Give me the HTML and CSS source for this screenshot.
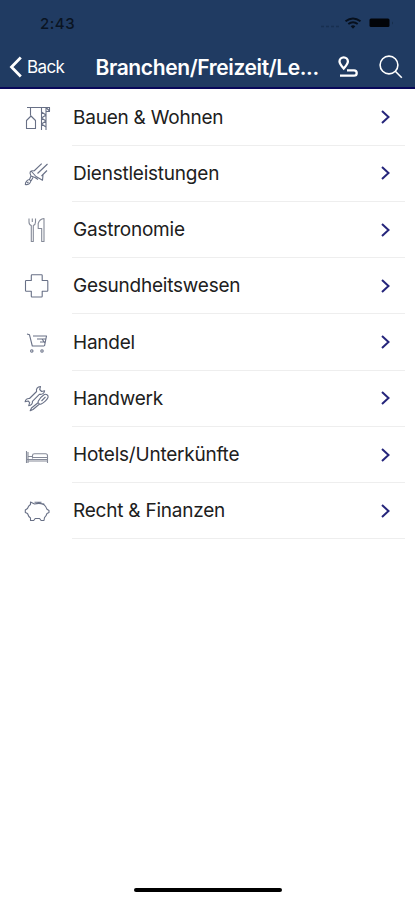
FILE: index.html
```html
<!DOCTYPE html>
<html lang="de">
<head>
<meta charset="utf-8">
<meta name="viewport" content="width=device-width, initial-scale=1">
<title>Branchen/Freizeit/Le...</title>
<link rel="stylesheet" href="styles.css">
</head>
<body>
<svg class="defs" aria-hidden="true"><symbol id="chev" viewBox="0 0 12 16"><path d="M2 2l6.500 6L2 14"/></symbol></svg>
<header>
  <div class="status">
    <time>2:43</time>
    <svg width="74" height="14" viewBox="0 0 74 14">
      <path d="M0 10.500h18" stroke="#172f50" stroke-width="1.500" stroke-dasharray="3 2" fill="none"/>
      <g fill="none" stroke="#07101d" stroke-width="2"><path d="M24.500 5.200q7.500-5.600 15 0M27.300 8q4.700-3.500 9.400 0"/></g>
      <path d="M29.700 10.200q2.300-1.700 4.600 0L32 12.700z" fill="#07101d"/>
      <rect x="48.500" y="2.500" width="20" height="8.500" rx="1.500" fill="#020408"/><path d="M71 5.500q2 1.500 0 3z" fill="#162d4b"/>
    </svg>
  </div>
  <nav>
    <a class="back"><svg width="14" height="24" viewBox="0 0 14 24"><path d="M11.800 2.500L2.500 12l9.300 9.500" fill="none" stroke="#fff" stroke-width="2.800"/></svg><span>Back</span></a>
    <h1>Branchen/Freizeit/Le...</h1>
    <svg class="route" width="22" height="24" viewBox="0 0 22 24"><path d="M6.700 13.500C4.500 11 2.500 8.700 2.500 6.500a4.200 4.200 0 018.400 0c0 2.200-2 4.500-4.200 7z"/><path d="M10 15.300h7a2.700 2.700 0 010 5.400H3"/></svg>
    <svg class="search" width="26" height="26" viewBox="0 0 26 26"><circle cx="11" cy="11" r="8.900"/><path d="M17.300 17.300l6.500 6.500"/></svg>
  </nav>
</header>
<main>
  <div class="row"><svg class="icon" viewBox="0 0 30 30"><path d="M5 4.500h23M8.500 4.500v8M9 13l-4.500 4.500v8h9v-8zM19.500 4.500V27M24 4.500V27M19.500 9l4.500 3-4.500 3 4.500 3-4.500 3 4.500 3M24 4.500l3.500 3.500V4.500M24 8.500h4"/></svg><div class="cell"><span>Bauen &amp; Wohnen</span><svg class="go"><use href="#chev"/></svg></div></div>
  <div class="row"><svg class="icon" viewBox="0 0 30 30"><path d="M19.700 4.700L12 12M25.500 5L15.500 14.500M25 11.500l-5.500 5.500M12 12c-2-.8-4 .3-4 2.200l1 3M9.500 12.500l4.500 5 6.500 3.700.5-5M9 17l4 1.500 3 2M9 17l-1.500 3.500M7.500 20.500c-2 0-4.200 2.500-4.200 5 2.500.7 5-1 5.500-3.500zM5 24l1.500-1M9 22l2-3.500"/></svg><div class="cell"><span>Dienstleistungen</span><svg class="go"><use href="#chev"/></svg></div></div>
  <div class="row"><svg class="icon light" viewBox="0 0 30 30"><path d="M7 3.500V7q0 2.700 2.300 3.500v16h2v-16q2.200-.8 2.200-3.500V3.500M10.300 3.500V7M22 26.500v-23q-4.500.5-5.800 5v5h3.500v13z"/></svg><div class="cell"><span>Gastronomie</span><svg class="go"><use href="#chev"/></svg></div></div>
  <div class="row"><svg class="icon" viewBox="0 0 30 30"><path d="M10 3.700h9.500q.7 0 .7.700v5.100h4.900q.7 0 .7.700v9.300q0 .7-.7.700h-4.900v5.100q0 .7-.7.700H10q-.7 0-.7-.7v-5.100H4.200q-.7 0-.7-.7v-9.300q0-.7.7-.7h5.100V4.400q0-.7.700-.7z"/></svg><div class="cell"><span>Gesundheitswesen</span><svg class="go"><use href="#chev"/></svg></div></div>
  <div class="row"><svg class="icon" viewBox="0 0 30 30"><path d="M5 6l2.500.8L10.300 18h12M11 8h13.500l-2 10M15 11h8.500M18 14h5M20 11l3 4"/><circle cx="9.800" cy="23" r="1.200"/><circle cx="20" cy="23" r="1.200"/></svg><div class="cell"><span>Handel</span><svg class="go"><use href="#chev"/></svg></div></div>
  <div class="row"><svg class="icon" viewBox="0 0 30 30"><path d="M18.500 2.500c-3 .3-4.700 2.500-3.900 5L7.500 14.500c-2.200-.4-4 1-4.400 3.300l3-.8 1.600 1.700-1 3c2.300-.3 4.200-2 3.700-4.300l7.200-7.200c2.500.7 4.700-1 5-3.500l-3 .8-1.900-2zM22 10.700c2-1.300 4.800.5 4 2.800-.7 2-4.300 5.500-6.800 6.500-1.500.7-3.700-.8-3-2.700 1-2.300 3.800-5.300 5.800-6.600zM19.500 17l4-4.200M16 18.700L9.500 24l-1.300 2.800 2.800-1.300 6.500-5.500"/></svg><div class="cell"><span>Handwerk</span><svg class="go"><use href="#chev"/></svg></div></div>
  <div class="row"><svg class="icon light" viewBox="0 0 30 30"><path d="M4.500 11v12M6 12v11M4.500 19.500h21v3.500M6 21h19M6 16.500h5M10.500 18.500v-3q0-1.700 2-1.700h11q2 0 2 2v3.700M11 17.500h14"/></svg><div class="cell"><span>Hotels/Unterkünfte</span><svg class="go"><use href="#chev"/></svg></div></div>
  <div class="row"><svg class="icon" viewBox="0 0 30 30"><path d="M8.500 6v2.500C6.700 9.700 6 11 5.500 12.500L3.300 14v2.500l2.200 1c.6 2 1.600 3.500 3 4.500v2.500h3.200l1.500-2h4.400l1.500 2H22l.5-3c1.400-1 2-2.500 2.500-4l2-1v-2l-2-1.200c-.6-2.300-1.700-3.800-3.500-4.900Q17.500 6.500 12.500 8zM12.500 6.200h7M20.500 7.500l2 1"/></svg><div class="cell"><span>Recht &amp; Finanzen</span><svg class="go"><use href="#chev"/></svg></div></div>
</main>
<footer><div class="home"></div></footer>
</body>
</html>
```
FILE: styles.css
```css
* { box-sizing: border-box; }
body { margin: 0; height: 900px; background: #fff; display: flex; flex-direction: column; font-family: Inter, "Liberation Sans", sans-serif; overflow: hidden; }
.defs { display: none; }
header { height: 89px; background: #203b62; border-bottom: 2px solid #08085a; flex: none; }
.status { height: 45px; padding: 1px 20px 0 40px; display: flex; align-items: center; justify-content: space-between; }
time { font-size: 15px; font-weight: 500; color: #0a1422; letter-spacing: .5px; }
nav { height: 44px; padding: 0 11px 0 9px; display: flex; align-items: center; color: #fff; }
.back { display: flex; align-items: center; width: 87px; gap: 4px; font-size: 17px; letter-spacing: -.6px; }
h1 { margin: 0; font-size: 21px; font-weight: 600; width: 243px; letter-spacing: -.38px; white-space: nowrap; }
.route, .search { fill: none; stroke: #fff; stroke-width: 2.3; flex: none; }
.search { stroke-width: 1.6; margin-left: 19px; }
main { flex: none; padding-top: .4px; }
.row { height: 56.25px; padding: 0 10px 0 22px; display: flex; align-items: center; }
.icon { width: 30px; height: 30px; flex: none; margin-right: 20px; fill: none; stroke: #687086; stroke-width: 1.1; stroke-linejoin: round; }
.light { stroke: #858a98; }
.cell { flex: 1; height: 100%; padding: 0 13px 0 1px; border-bottom: 1px solid #eee; display: flex; align-items: center; justify-content: space-between; font-size: 19px; letter-spacing: -.23px; color: #202020; white-space: nowrap; }
.go { width: 12px; height: 16px; fill: none; stroke: #25257b; stroke-width: 2; }
footer { margin-top: auto; height: 12.500px; display: flex; justify-content: center; }
.home { width: 148px; height: 4px; border-radius: 2px; background: #000; }
```
